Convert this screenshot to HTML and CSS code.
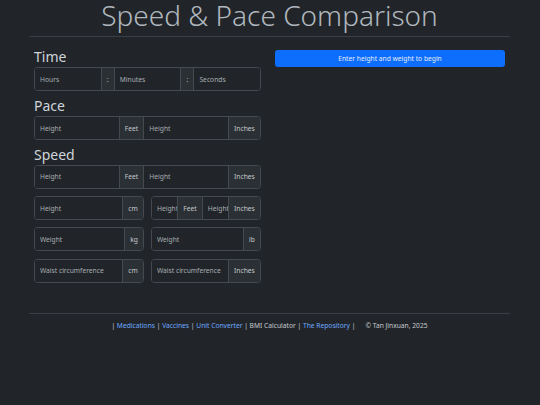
FILE: index.html
```html
<!DOCTYPE html>
<html lang="en">
<head>
<meta charset="utf-8">
<title>Speed &amp; Pace Comparison</title>
<link rel="stylesheet" href="styles.css">
</head>
<body>
<div class="page">
  <h1 class="title">Speed &amp; Pace Comparison</h1>
  <hr class="rule">
  <div class="layout">
    <div class="left">
      <h2 class="label first">Time</h2>
      <div class="group">
        <input type="text" placeholder="Hours">
        <span class="addon">:</span>
        <input type="text" placeholder="Minutes">
        <span class="addon">:</span>
        <input type="text" placeholder="Seconds">
      </div>

      <h2 class="label">Pace</h2>
      <div class="group">
        <input type="text" placeholder="Height">
        <span class="addon">Feet</span>
        <input type="text" placeholder="Height">
        <span class="addon">Inches</span>
      </div>

      <h2 class="label">Speed</h2>
      <div class="stack">
        <div class="group">
          <input type="text" placeholder="Height">
          <span class="addon">Feet</span>
          <input type="text" placeholder="Height">
          <span class="addon">Inches</span>
        </div>
        <div class="pair">
          <div class="group">
            <input type="text" placeholder="Height">
            <span class="addon">cm</span>
          </div>
          <div class="group">
            <input type="text" placeholder="Height">
            <span class="addon">Feet</span>
            <input type="text" placeholder="Height">
            <span class="addon">Inches</span>
          </div>
        </div>
        <div class="pair">
          <div class="group">
            <input type="text" placeholder="Weight">
            <span class="addon">kg</span>
          </div>
          <div class="group">
            <input type="text" placeholder="Weight">
            <span class="addon">lb</span>
          </div>
        </div>
        <div class="pair">
          <div class="group">
            <input type="text" placeholder="Waist circumference">
            <span class="addon">cm</span>
          </div>
          <div class="group">
            <input type="text" placeholder="Waist circumference">
            <span class="addon">Inches</span>
          </div>
        </div>
      </div>
    </div>
    <div class="right">
      <button class="begin" type="button">Enter height and weight to begin</button>
    </div>
  </div>
  <hr class="rule footer-rule">
  <footer class="footer">
    | <a href="#">Medications</a> | <a href="#">Vaccines</a> | <a href="#">Unit Converter</a> | BMI Calculator | <a href="#">The Repository</a> |<span class="copy">© Tan Jinxuan, 2025</span>
  </footer>
</div>
</body>
</html>
```

FILE: styles.css
```css
html, body {
  margin: 0;
  background: #212529;
}
body {
  color: #dee2e6;
  font-family: "Noto Sans", "Open Sans", sans-serif;
}
.page {
  padding: 0 30px 0 29px;
}
.title {
  margin: 0;
  padding-top: 1px;
  font-size: 28px;
  font-weight: 300;
  line-height: 29px;
  text-align: center;
  color: #b0b7be;
}
.rule {
  margin: 6px 0 0;
  height: 0;
  border: 0;
  border-top: 1px solid #3a3f45;
}
.layout {
  display: grid;
  grid-template-columns: 227px 230px;
  column-gap: 14px;
  padding: 10.8px 0 0 5px;
}
.label {
  margin: 5.5px 0 2.4px;
  font-size: 14px;
  font-weight: 400;
  line-height: 17px;
  color: #ced4da;
}
.label.first {
  margin-top: 0;
}
.group {
  display: flex;
  height: 24px;
  box-sizing: border-box;
  border: 1px solid #454a50;
  border-radius: 3.5px;
  overflow: hidden;
}
.group > * + * {
  border-left: 1px solid #454a50;
}
.group input {
  flex: 1 1 0;
  width: 1%;
  min-width: 0;
  margin: 0;
  padding: 0 0 0 5px;
  border-top: 0;
  border-right: 0;
  border-bottom: 0;
  background: #212529;
  font-family: inherit;
  font-size: 6.7px;
  color: #dee2e6;
  outline: none;
}
.group input:first-child {
  border-left: 0;
}
.group input::placeholder {
  color: #a8adb2;
  opacity: 1;
}
.addon {
  flex: none;
  display: flex;
  align-items: center;
  padding: 0 5.2px;
  background: #2b3035;
  font-size: 6.7px;
  color: #c3c8cc;
}
.stack {
  display: flex;
  flex-direction: column;
  gap: 7.2px;
}
.pair {
  display: grid;
  grid-template-columns: 1fr 1fr;
  column-gap: 7px;
}
.begin {
  display: block;
  width: 100%;
  height: 17px;
  margin: 2.2px 0 0;
  padding: 0;
  border: 0;
  border-radius: 3px;
  background: #0d6efd;
  color: #e4ecfb;
  font-family: inherit;
  font-size: 6.7px;
}
.footer-rule {
  margin-top: 30.5px;
}
.footer {
  margin-top: 7px;
  font-size: 6.7px;
  line-height: 10px;
  text-align: center;
  color: #c6cacf;
}
.footer a {
  color: #6ea8fe;
  text-decoration: none;
}
.copy {
  margin-left: 10px;
}
```
